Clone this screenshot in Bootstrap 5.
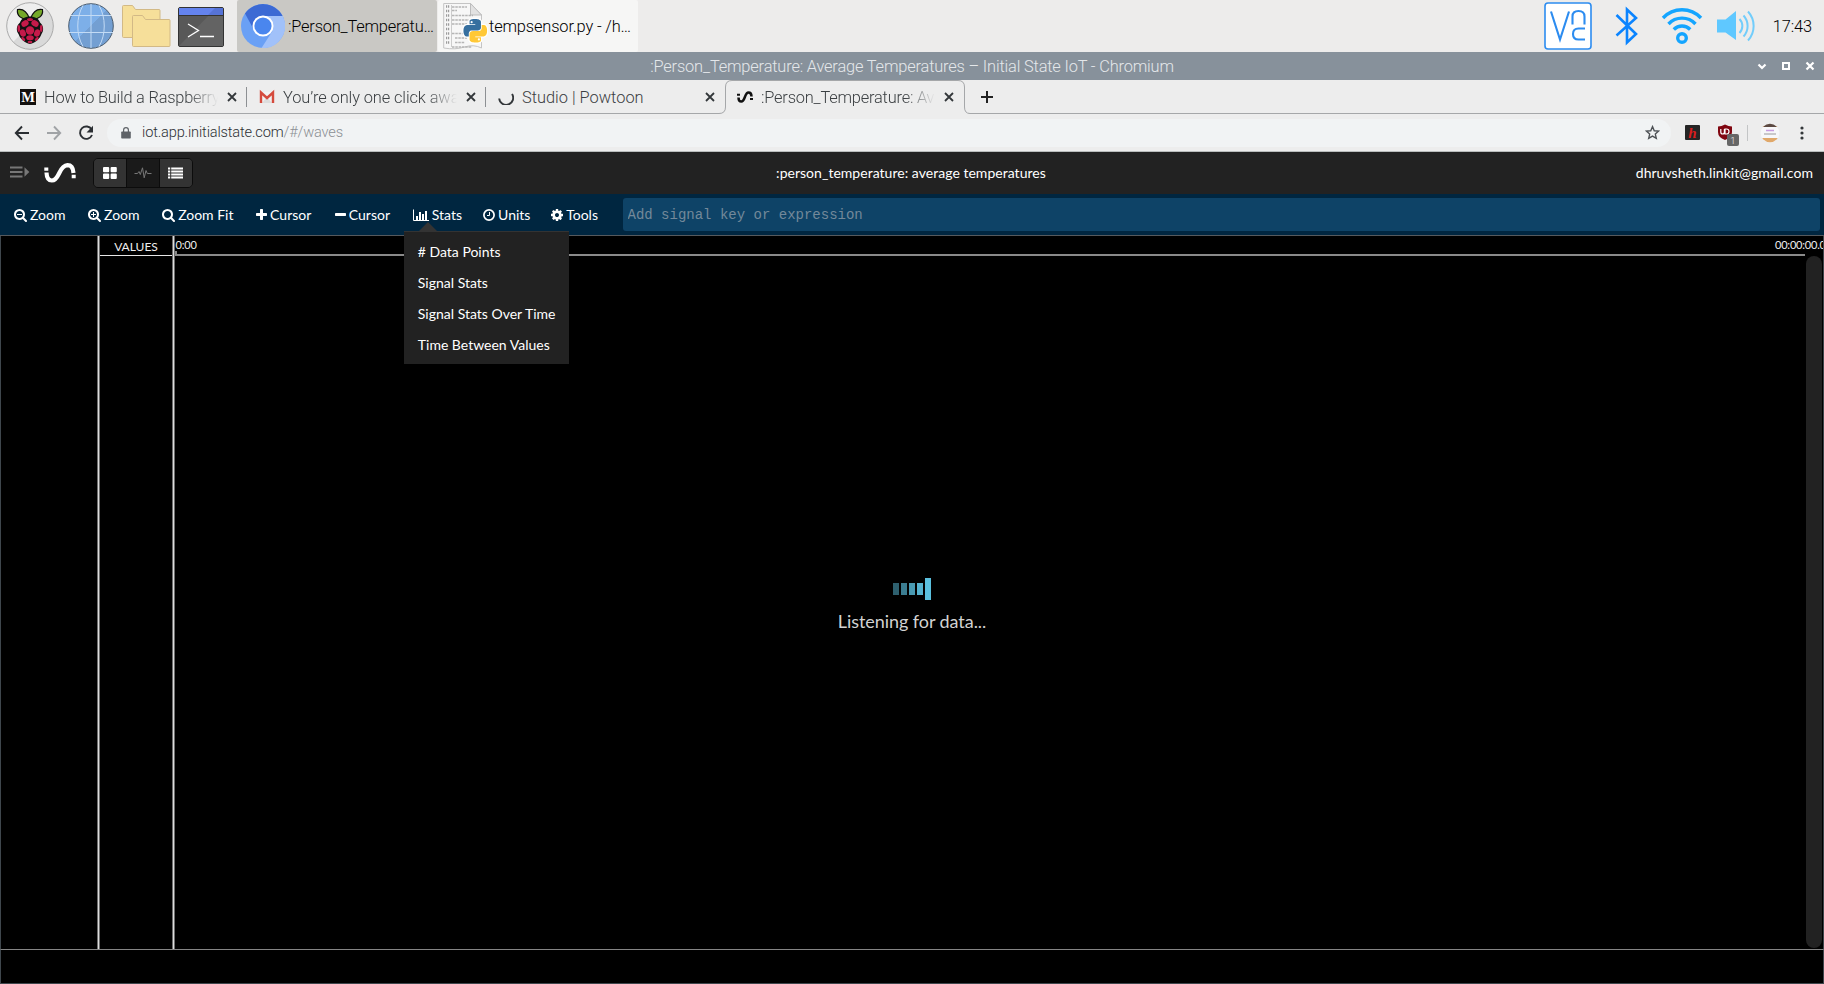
<!DOCTYPE html>
<html lang="en">
<head>
<meta charset="utf-8">
<title>:Person_Temperature: Average Temperatures – Initial State IoT</title>
<link href="https://cdn.jsdelivr.net/npm/bootstrap@5.3.0/dist/css/bootstrap.min.css" rel="stylesheet">
<style>
  html, body { height: 100%; overflow: hidden; }
  body { font-family: Roboto, "Liberation Sans", sans-serif; font-weight: 300; background: #000; line-height: 1.2; }
  svg { display: block; flex: none; }
  .taskbar { height: 52px; background: #edeceb; color: #000; font-size: 16.4px; padding-left: 6px; padding-right: 12px; }
  .task { width: 200px; height: 52px; border-radius: 2px; white-space: nowrap; letter-spacing: -.2px; }
  .task > span { padding-top: 1px; }
  .task-active { background: #c9c8c4; }
  .task-idle { background: #f6f6f5; letter-spacing: -.14px; }
  .clock { padding-top: 1px; letter-spacing: -.1px; }
  .titlebar { height: 28px; background: #87919b; color: #e4e7ea; font-size: 16.4px; letter-spacing: -.17px; padding-top: 1px; }
  .win-buttons { gap: 12px; padding-right: 8px; top: 8px; }
  .tabstrip { height: 34px; background: #ededed; padding-left: 8px; border-bottom: 1px solid #a5a7a9; }
  .tab { width: 239px; height: 33px; padding: 1px 9px 0 12px; font-size: 16.4px; color: #3c4043; position: relative; }
  .tab-divider { border-right: 0; }
  .tab-divider::after { content: ""; position: absolute; right: 0; top: 7px; width: 1px; height: 20px; background: #8d9093; }
  .tab-label { flex: 1 1 0; min-width: 0; white-space: nowrap; margin-left: 8px; margin-right: 8px; padding-top: 1px; letter-spacing: -.1px; }
  .fade-end { overflow: hidden; -webkit-mask-image: linear-gradient(90deg, #000 calc(100% - 30px), transparent); mask-image: linear-gradient(90deg, #000 calc(100% - 30px), transparent); }
  .tab-live > .tab-edge { position: absolute; left: -6px; top: 0; }
  .tab-live > :not(.tab-edge) { position: relative; }
  .navrow { height: 38px; background: #ededed; border-bottom: 1px solid #b9bdbd; padding-left: 14px; padding-right: 20px; }
  .omnibox { height: 28px; border-radius: 14px; background: #f1f3f4; font-size: 14.6px; letter-spacing: -.15px; color: #2c2f33; padding: 0 11px 0 14px; }
  .url-path { color: #8b8f93; }
  .apphead { height: 42px; background: #222; color: #fff; font: 400 14px/20px Lato, sans-serif; letter-spacing: .03px; padding-left: 9px; padding-right: 11px; }
  .apphead > div { flex: 1 1 0; }
  .viewgroup { border: 1px solid #0c0c0c; border-radius: 5px; overflow: hidden; height: 30px; margin-left: 16px; }
  .viewgroup > span { width: 32px; background: #333; }
  .viewgroup > span + span { border-left: 1px solid #0c0c0c; width: 33px; }
  .viewgroup > .view-on { background: #1a1a1a; }
  .toolrow { height: 42px; background: #002640; color: #fff; border-bottom: 1px solid #55595d; font: 400 14px/20px Lato, sans-serif; padding-left: 14px; padding-right: 4px; }
  .tool { gap: 3px; white-space: nowrap; position: relative; margin-left: 22.6px; }
  .signal-box { height: 33px; border: 0; border-radius: 3px; background: #0e4367; font: 14px "Liberation Mono", monospace; color: #fff; padding: 0 5px; }
  .signal-box::placeholder { color: #73899a; opacity: 1; }
  .statsmenu { position: absolute; left: -9px; top: 26px; width: 165px; background: #222; border-top: 1px solid #333; padding: 4px 0; z-index: 5; }
  .statsmenu::before { content: ""; position: absolute; left: 15px; top: -10px; border: 9px solid transparent; border-top: 0; border-bottom-color: #333; }
  .statsmenu > div { height: 31px; line-height: 31px; padding-left: 14px; }
  .waves { height: 713px; color: #eee; font: 400 11px/14px Lato, sans-serif; border-left: 1px solid #3f474d; border-right: 1px solid #3f474d; }
  .rail { width: 96px; }
  .splitter { width: 3px; background: linear-gradient(90deg, #6d6d6d 1px, #dcdcdc 1px 2px, #6d6d6d 2px); }
  .values-head { height: 20px; border-bottom: 1px solid #e6e6e6; font-size: 12px; line-height: 21px; width: 72px; }
  .ruler { height: 18px; overflow: hidden; white-space: nowrap; padding-top: 2px; letter-spacing: -.2px; }
  .ruler > :first-child { margin-left: .5px; }
  .ruler-line { height: 2px; background: #8a8a8a; margin-right: 18px; position: relative; }
  .ruler-line::before { content: ""; position: absolute; left: 0; top: -3px; width: 2px; height: 3px; background: #8a8a8a; }
  .vscroll { width: 16px; height: 692px; border-radius: 8px; background: #222; margin-right: 1px; }
  .overlay { top: 578px; }
  .loader { gap: 2px; height: 22px; }
  .loader i { width: 6px; height: 12px; background: #5bc0de; }
  .listening { font: 400 18px/24px Lato, sans-serif; letter-spacing: -.06px; color: #d2d2d2; margin-top: 9px; }
  .bottom { height: 35px; border: 1px solid #3f474d; border-top: 1px solid #858585; }
</style>
</head>
<body>
<div class="taskbar d-flex align-items-center">
  <svg width="48" height="50" viewBox="0 0 48 50">
    <defs><linearGradient id="gr" x1="0" y1="0" x2="1" y2="1"><stop offset=".48" stop-color="#eee"/><stop offset=".5" stop-color="#d9d9d9"/></linearGradient></defs>
    <circle cx="24" cy="25" r="23.3" fill="url(#gr)" stroke="#aaa"/>
    <path d="M23.500 17.500C20 8 14 8 11.500 8.500c-1 6 4 10.500 11 9.500zM24.500 17.500C28 8 34 8 36.500 8.500c1 6-4 10.500-11 9.500z" fill="#75a928" stroke="#111" stroke-width="1.200"/>
    <path d="M24 15.500c5 0 9 2.500 10 6 3.500 3 4.200 8 1.500 11.500C34 38 29 42 24 43c-5-1-10-5-11.500-10-2.700-3.500-2-8.500 1.500-11.500 1-3.500 5-6 10-6z" fill="#111"/>
    <g fill="#c51a4a"><circle cx="24" cy="29.500" r="4.200"/><ellipse cx="19" cy="22.500" rx="3.800" ry="3" transform="rotate(-30 19 22.500)"/><ellipse cx="29" cy="22.500" rx="3.800" ry="3" transform="rotate(30 29 22.500)"/><ellipse cx="24" cy="18.500" rx="3" ry="1.600"/><ellipse cx="16.800" cy="32" rx="3" ry="3.800" transform="rotate(-20 16.800 32)"/><ellipse cx="31.200" cy="32" rx="3" ry="3.800" transform="rotate(20 31.200 32)"/><ellipse cx="12.800" cy="27.500" rx="1.300" ry="3.400"/><ellipse cx="35.200" cy="27.500" rx="1.300" ry="3.400"/><ellipse cx="24" cy="36.700" rx="3.800" ry="2.500"/><ellipse cx="17.300" cy="38" rx="2.400" ry="1.300" transform="rotate(45 17.300 38)"/><ellipse cx="30.700" cy="38" rx="2.400" ry="1.300" transform="rotate(-45 30.700 38)"/><ellipse cx="24" cy="41" rx="2.400" ry="1.200"/></g>
  </svg>
  <svg width="46" height="46" viewBox="0 0 46 46" style="margin-left:14px">
    <defs><linearGradient id="gb" x1="0" y1="0" x2="1" y2="1"><stop offset=".49" stop-color="#7dafe8"/><stop offset=".5" stop-color="#739fd2"/></linearGradient></defs>
    <circle cx="23" cy="23" r="22.300" fill="url(#gb)" stroke="#4b5c6e"/>
    <path d="M23 1v44M3 12.500h40M1 29.500h44M15 2.500C8 14 8 32 15 43.500M31 2.500c7 11.500 7 29.500 0 41" fill="none" stroke="#c3dbf5" stroke-width="1"/>
  </svg>
  <svg width="49" height="43" viewBox="0 0 49 43" style="margin-left:8px">
    <g fill="#f6df9a" stroke="#d2b986" stroke-width="1"><path d="M.5 31.500V1.500q0-1 1-1h9l3 4H37q1 0 1 1v26q0 1-1 1H1.500q-1 0-1-1z"/><path d="M10.500 40.500v-29q0-1 1-1h9l3 4H47q1 0 1 1v25q0 1-1 1H11.500q-1 0-1-1z"/></g>
  </svg>
  <svg width="46" height="40" viewBox="0 0 46 40" style="margin-left:7px;margin-top:2px">
    <rect x=".5" y=".5" width="45" height="39" rx="1.500" fill="#585858" stroke="#333"/><path d="M38 1L1 39h44V1z" fill="#636363"/><path d="M1 1h44v7H1z" fill="#6483ee"/><path d="M37 1h8v7H30z" fill="#5673d6"/><path d="M1 8.500h44" stroke="#333"/>
    <path d="M10 17l10.500 6.500L10 30M22 29.500h14" fill="none" stroke="#fff" stroke-width="1.300"/>
  </svg>
  <div class="task task-active d-flex align-items-center" style="margin-left:13px;padding-left:4px">
    <svg width="44" height="44" viewBox="0 0 44 44">
      <circle cx="22" cy="22" r="22" fill="#6aa0f5"/>
      <path d="M22 12h19.600A22 22 0 0 1 20.500 44l11-17z" fill="#a1c1f9"/>
      <path d="M4 9.500A22 22 0 0 1 41.600 12H22a10 10 0 0 0-9 14z" fill="#3c6ad4"/>
      <circle cx="22" cy="22" r="10.500" fill="#fff"/><circle cx="22" cy="22" r="8.600" fill="#4a86ee"/>
    </svg>
    <span style="margin-left:3px">:Person_Temperatu…</span>
  </div>
  <div class="task task-idle d-flex align-items-center" style="margin-left:1px;padding-left:5px">
    <svg width="45" height="48" viewBox="0 0 45 48">
      <defs><path id="py" d="M14.250.18l.9.2.73.26.59.3.45.32.34.34.25.34.16.33.1.3.04.26.02.2-.01.13V8.500l-.05.63-.13.55-.21.46-.26.38-.3.31-.33.25-.35.19-.35.14-.33.1-.3.07-.26.04-.21.02H8.770l-.69.05-.59.14-.5.22-.41.27-.33.32-.27.35-.2.36-.15.37-.1.35-.07.32-.04.27-.02.21v3.060H3.170l-.21-.03-.28-.07-.32-.12-.35-.18-.36-.26-.36-.36-.35-.46-.32-.59-.28-.73-.21-.88-.14-1.050-.05-1.230.06-1.220.16-1.040.24-.87.32-.71.36-.57.4-.44.42-.33.42-.24.4-.16.36-.1.32-.05.24-.01h.16l.06.01h8.160v-.83H6.180l-.01-2.750-.02-.37.05-.34.11-.31.17-.28.25-.26.31-.23.38-.2.44-.18.51-.15.58-.12.64-.1.71-.06.77-.04.84-.02 1.270.05z"/></defs>
      <path d="M.7 1.500h27L38.500 13v33q-8-4-17-1t-20.800 1z" fill="#f7f7f7" stroke="#c4c4c4"/><path d="M27.500 1.500V13h11z" fill="#e2e2e2" stroke="#bdbdbd"/>
      <path d="M9 5h15M9 8.500h5M9 13.500h21M9 18h17M9 22h15M9 31.500h15M12 36h12M12 40.500h10M9 45h20" stroke="#b5b5b5" stroke-width="1.300" stroke-dasharray="2.500 .8"/>
      <path d="M3 4.500h4M3 9h4M3 13.500h4M3 18h4M3 22.500h4M3 27h4M3 31.500h4M3 36h4M3 40.500h4" stroke="#9b9b9b" stroke-width="2.400" stroke-dasharray="1.200 .8 1.200"/><path d="M8.500 3v42" stroke="#ccc"/>
      <g transform="translate(20.500 17) scale(.98)">
        <g fill="#fff" stroke="#fff" stroke-width="2.500"><use href="#py"/><use href="#py" transform="rotate(180 12 12)"/></g>
        <use href="#py" fill="#366f9f"/><use href="#py" fill="#ffc836" transform="rotate(180 12 12)"/>
        <circle cx="8.300" cy="3.200" r="1.100" fill="#fff"/><circle cx="15.700" cy="20.800" r="1.100" fill="#fff"/>
      </g>
    </svg>
    <span style="margin-left:1px">tempsensor.py - /h…</span>
  </div>
  <div class="ms-auto d-flex align-items-center">
    <svg width="48" height="48" viewBox="0 0 48 48"><rect x="1" y="1" width="46" height="46" rx="3" fill="#fff" stroke="#2c8cf0" stroke-width="1.600"/><path d="M7 9.500l9 28 9-28M28.500 22.500v-8q0-5.500 6-5.500t6 5.500v8M41 26.500h-6.500q-5.500 0-5.500 5.500t5.500 5.500H41" fill="none" stroke="#2c8cf0" stroke-width="2.100"/></svg>
    <svg width="24" height="42" viewBox="0 0 24 42" style="margin-left:23px"><path d="M1.500 10l19.500 19L12 37.500v-33L21 13 1.500 30.500" fill="none" stroke="#0b84ff" stroke-width="2.600"/></svg>
    <svg width="42" height="38" viewBox="0 0 42 38" style="margin-left:22px"><g fill="none" stroke="#14a5ff" stroke-width="3.400"><path d="M2 11a26 26 0 0 1 38 0M7.500 17a18.500 18.500 0 0 1 27 0M12.800 22.500a11.500 11.500 0 0 1 16.400 0"/><circle cx="21" cy="31" r="4.300"/></g></svg>
    <svg width="39" height="32" viewBox="0 0 39 32" style="margin-left:14px"><path d="M0 9.500h8.500L19 1v29L8.500 22.500H0z" fill="#5fc8ff"/><path d="M22.500 9a10 10 0 0 1 0 14M26.500 5.500a15.500 15.500 0 0 1 0 21M31 1.500a21.500 21.500 0 0 1 0 29" fill="none" stroke="#72cdfb" stroke-width="2"/></svg>
    <span class="clock" style="margin-left:17px">17:43</span>
  </div>
</div>

<div class="titlebar d-flex align-items-center position-relative">
  <span class="flex-fill text-center">:Person_Temperature: Average Temperatures – Initial State IoT - Chromium</span>
  <div class="win-buttons d-flex position-absolute end-0">
    <svg width="12" height="12" viewBox="0 0 12 12"><path d="M2.500 4.500L6 8l3.500-3.500" fill="none" stroke="#fff" stroke-width="2.200"/></svg>
    <svg width="12" height="12" viewBox="0 0 12 12"><path d="M3 3h6v6H3z" fill="none" stroke="#fff" stroke-width="2"/></svg>
    <svg width="12" height="12" viewBox="0 0 12 12"><path d="M2.500 2.500l7 7M9.500 2.500l-7 7" fill="none" stroke="#fff" stroke-width="2.200"/></svg>
  </div>
</div>

<div class="tabstrip d-flex">
  <div class="tab tab-divider d-flex align-items-center">
    <svg width="16" height="16" viewBox="0 0 16 16"><path d="M0 0h16v16H0z" fill="#12100e"/><text x="8" y="13" text-anchor="middle" font-family="Liberation Serif, serif" font-weight="700" font-size="14.500" fill="#fff">M</text></svg>
    <span class="tab-label fade-end" style="letter-spacing:-.22px">How to Build a Raspberry</span>
    <svg width="12" height="12" viewBox="0 0 12 12"><path d="M2 2l8 8M10 2l-8 8" stroke="#33373a" stroke-width="1.800"/></svg>
  </div>
  <div class="tab tab-divider d-flex align-items-center">
    <svg width="16" height="16" viewBox="0 0 16 16"><path d="M1 3h14v11H1z" fill="#f2f2f2"/><path d="M3 14l5-6 5 6z" fill="#ddd"/><path d="M2 14V3.500L8 9l6-5.500V14" fill="none" stroke="#d54b3d" stroke-width="2.400"/></svg>
    <span class="tab-label fade-end">You’re only one click awa</span>
    <svg width="12" height="12" viewBox="0 0 12 12"><path d="M2 2l8 8M10 2l-8 8" stroke="#33373a" stroke-width="1.800"/></svg>
  </div>
  <div class="tab d-flex align-items-center">
    <svg width="16" height="16" viewBox="0 0 16 16"><path d="M1.200 9.500A7 7 0 1 0 14 5" fill="none" stroke="#33373a" stroke-width="1.900"/></svg>
    <span class="tab-label" style="letter-spacing:0">Studio | Powtoon</span>
    <svg width="12" height="12" viewBox="0 0 12 12"><path d="M2 2l8 8M10 2l-8 8" stroke="#33373a" stroke-width="1.800"/></svg>
  </div>
  <div class="tab tab-live d-flex align-items-center">
    <svg class="tab-edge" width="251" height="34" viewBox="0 0 251 34"><path d="M0 34v-.5q6.500 0 6.500-6.500V7q0-6.500 6.500-6.500h226q6.500 0 6.500 6.500v20q0 6.500 5.500 6.500v.5z" fill="#ededed"/><path d="M0 33.500q6.500 0 6.500-6.500V7q0-6.500 6.500-6.500h226q6.500 0 6.500 6.500v20q0 6.500 5.500 6.500" fill="none" stroke="#a5a7a9"/></svg>
    <svg width="16" height="14" viewBox="0 0 16 14"><path d="M1.500 7.500q0 4 2.800 4 2 0 3.600-4.500T11.500 2.500q3 0 3 4" fill="none" stroke="#111" stroke-width="2.500"/><path d="M0 4.700h3M13 9h3" stroke="#111" stroke-width="2"/></svg>
    <span class="tab-label fade-end" style="letter-spacing:-.2px">:Person_Temperature: Ave</span>
    <svg width="12" height="12" viewBox="0 0 12 12"><path d="M2 2l8 8M10 2l-8 8" stroke="#33373a" stroke-width="1.800"/></svg>
  </div>
  <svg width="14" height="33" viewBox="0 0 14 33" style="margin-left:16px"><path d="M1 17h12M7 11v12" stroke="#222" stroke-width="2"/></svg>
</div>

<div class="navrow d-flex align-items-center">
  <svg width="16" height="16" viewBox="0 0 16 16"><path d="M15 8H2.500M8 1.500L1.800 8 8 14.500" fill="none" stroke="#2b2f33" stroke-width="1.900"/></svg>
  <svg width="16" height="16" viewBox="0 0 16 16" style="margin-left:16px"><path d="M1 8h12.500M8 1.500L14.200 8 8 14.500" fill="none" stroke="#a0a3a6" stroke-width="1.900"/></svg>
  <svg width="16" height="16" viewBox="0 0 16 16" style="margin-left:16px"><path d="M13.600 4.500A6.200 6.200 0 1 0 14 10" fill="none" stroke="#2b2f33" stroke-width="1.900"/><path d="M15 .8v6.700H8.500z" fill="#2b2f33"/></svg>
  <div class="omnibox d-flex align-items-center flex-fill" style="margin-left:13px">
    <svg width="10" height="12" viewBox="0 0 10 12"><path d="M1 4.500h8q.8 0 .8.800v5.400q0 .8-.8.800H1q-.8 0-.8-.8V5.300q0-.8.8-.8z" fill="#5f6368"/><path d="M2.600 5V3a2.400 2.400 0 0 1 4.800 0v2" fill="none" stroke="#5f6368" stroke-width="1.200"/></svg>
    <span style="margin-left:11px">iot.app.initialstate.com<span class="url-path">/#/waves</span></span>
    <svg class="ms-auto" width="15" height="15" viewBox="0 0 24 24"><path d="M12 2.600l2.800 6.600 7 .6-5.300 4.700 1.600 7L12 17.800l-6.100 3.700 1.600-7L2.200 9.800l7-.6z" fill="none" stroke="#4e5256" stroke-width="2.200"/></svg>
  </div>
  <svg width="15" height="15" viewBox="0 0 15 15" style="margin-left:14px;margin-top:-1px"><rect width="15" height="15" rx="1" fill="#252525"/><text x="7.500" y="12.500" text-anchor="middle" font-family="Liberation Serif, serif" font-weight="700" font-style="italic" font-size="15" fill="#d81e1e">h</text></svg>
  <svg width="24" height="24" viewBox="0 0 24 24" style="margin-left:16px;margin-top:2px"><path d="M9 2.500q3.500 2 7 2v5.500q0 5.500-7 8-7-2.500-7-8V4.500q3.500 0 7-2z" fill="#800610"/><path d="M4.800 7v3q0 2 1.800 2t1.800-2V7M9 12V7h1.500q2.500 0 2.500 2.500T10.500 12z" fill="none" stroke="#fff" stroke-width="1.200"/><rect x="11" y="12" width="12" height="12" rx="2" fill="#666"/><text x="17" y="21.500" text-anchor="middle" font-family="Roboto, sans-serif" font-size="9.500" fill="#eee">1</text></svg>
  <div style="width:1px;height:16px;background:#c3c5c6;margin-left:7px"></div>
  <svg width="20" height="20" viewBox="0 0 20 20" style="margin-left:12px"><defs><clipPath id="av"><circle cx="10" cy="10" r="9.300"/></clipPath></defs><g clip-path="url(#av)"><path d="M0 0h20v20H0z" fill="#f7f7f9"/><path d="M0 0h20v4H0z" fill="#5c4a42"/><path d="M0 1h4v3H0zM16 1h4v3h-4zM0 15h20v5H0z" fill="#e0a86a"/><path d="M6 7.500h8" stroke="#c79ae0" stroke-width="1.400"/><path d="M4 11h12" stroke="#999"/></g></svg>
  <svg width="4" height="14" viewBox="0 0 4 14" style="margin-left:20px"><g fill="#33373a"><circle cx="2" cy="2" r="1.600"/><circle cx="2" cy="7" r="1.600"/><circle cx="2" cy="12" r="1.600"/></g></svg>
</div>

<div class="apphead d-flex align-items-center">
  <div class="d-flex align-items-center">
    <svg width="21" height="12" viewBox="0 0 21 12" style="margin-top:-2px"><path d="M1 1.500h12.500M1 6h12.500M1 10.500h12.500" stroke="#777" stroke-width="2"/><path d="M15.500 1.200l4.800 4.800-4.800 4.800z" fill="#777"/></svg>
    <svg width="34" height="22" viewBox="0 0 34 22" style="margin-left:13px"><path d="M3.500 10.500q.3 8 5.300 8 4 0 7.500-7.500T24.500 3.200Q30 3.200 30.500 11" fill="none" stroke="#fff" stroke-width="4.200"/><path d="M1.300 5.500h4v3.300h-4zM28.700 12.800h4v3.500h-4z" fill="#fff"/></svg>
    <div class="viewgroup d-flex">
      <span class="d-flex align-items-center justify-content-center"><svg width="14" height="12" viewBox="0 0 14 12"><path d="M0 1q0-1 1-1h4.200q1 0 1 1v3.200q0 1-1 1H1q-1 0-1-1zM7.600 1q0-1 1-1h4.200q1 0 1 1v3.200q0 1-1 1H8.600q-1 0-1-1zM0 7.500q0-1 1-1h4.200q1 0 1 1V11q0 1-1 1H1q-1 0-1-1zM7.600 7.500q0-1 1-1h4.200q1 0 1 1V11q0 1-1 1H8.600q-1 0-1-1z" fill="#fff"/></svg></span>
      <span class="view-on d-flex align-items-center justify-content-center"><svg width="18" height="12" viewBox="0 0 18 12"><path d="M.5 6.500h3l1.500-2 1.300 3L8.500.8l1.700 10L12 3.500l1.300 3H17.500" fill="none" stroke="#777" stroke-width="1"/></svg></span>
      <span class="d-flex align-items-center justify-content-center"><svg width="16" height="12" viewBox="0 0 16 12"><path d="M0 1.500h2.200M0 4.500h2.200M0 7.500h2.200M0 10.500h2.200M3.200 1.500H15M3.200 4.500H15M3.200 7.500H15M3.200 10.500H15" stroke="#fff" stroke-width="2"/></svg></span>
    </div>
  </div>
  <div class="text-center">:person_temperature: average temperatures</div>
  <div class="text-end">dhruvsheth.linkit@gmail.com</div>
</div>

<div class="toolrow d-flex align-items-center">
  <div class="tool d-flex align-items-center" style="margin-left:0"><svg width="13" height="14" viewBox="64 0 1664 1792"><path id="lens" d="M1216 832q0-185-131.500-316.500t-316.500-131.500-316.500 131.500-131.500 316.500 131.500 316.500 316.500 131.500 316.500-131.500 131.500-316.500zm512 832q0 52-38 90t-90 38q-54 0-90-38l-343-342q-179 124-399 124-143 0-273.500-55.500t-225-150-150-225-55.500-273.500 55.500-273.500 150-225 225-150 273.500-55.500 273.500 55.500 225 150 150 225 55.500 273.500q0 220-124 399l343 343q37 37 37 90z" fill="#fff"/><path d="M448 832h640" stroke="#fff" stroke-width="128"/></svg><span>Zoom</span></div>
  <div class="tool d-flex align-items-center"><svg width="13" height="14" viewBox="64 0 1664 1792"><use href="#lens"/><path d="M448 832h640M768 512v640" stroke="#fff" stroke-width="128"/></svg><span>Zoom</span></div>
  <div class="tool d-flex align-items-center"><svg width="13" height="14" viewBox="64 0 1664 1792"><use href="#lens"/></svg><span>Zoom Fit</span></div>
  <div class="tool d-flex align-items-center"><svg width="11" height="14" viewBox="192 0 1408 1792"><path d="M1600 736v192q0 40-28 68t-68 28h-416v416q0 40-28 68t-68 28h-192q-40 0-68-28t-28-68v-416h-416q-40 0-68-28t-28-68v-192q0-40 28-68t68-28h416v-416q0-40 28-68t68-28h192q40 0 68 28t28 68v416h416q40 0 68 28t28 68z" fill="#fff"/></svg><span>Cursor</span></div>
  <div class="tool d-flex align-items-center" style="margin-left:23.500px"><svg width="11" height="14" viewBox="192 0 1408 1792"><path d="M1600 736v192q0 40-28 68t-68 28h-1216q-40 0-68-28t-28-68v-192q0-40 28-68t68-28h1216q40 0 68 28t28 68z" fill="#fff"/></svg><span>Cursor</span></div>
  <div class="tool d-flex align-items-center" style="margin-left:22.800px">
    <svg width="16" height="14" viewBox="0 0 16 14"><path d="M.5 1.500v11H16" fill="none" stroke="#fff" stroke-width="1"/><path d="M3 8h2v4H3zM6 4h2v8H6zM9 6h2v6H9zM12 3h2v9h-2z" fill="#fff"/></svg><span>Stats</span>
    <div class="statsmenu"><div># Data Points</div><div>Signal Stats</div><div>Signal Stats Over Time</div><div>Time Between Values</div></div>
  </div>
  <div class="tool d-flex align-items-center" style="margin-left:21px"><svg width="12" height="14" viewBox="0 0 12 14"><circle cx="6" cy="7" r="5.100" fill="none" stroke="#fff" stroke-width="1.700"/><path d="M6.500 4v3.500H4" fill="none" stroke="#fff"/></svg><span>Units</span></div>
  <div class="tool d-flex align-items-center" style="margin-left:20.800px"><svg width="12" height="14" viewBox="128 0 1536 1792"><path d="M1152 896q0-106-75-181t-181-75-181 75-75 181 75 181 181 75 181-75 75-181zm512-109v222q0 12-8 23t-20 13l-185 28q-19 54-39 91 35 50 107 138 10 12 10 25t-9 23q-27 37-99 108t-94 71q-12 0-26-9l-138-108q-44 23-91 38-16 136-29 186-7 28-36 28h-222q-14 0-24.500-8.500t-11.500-21.500l-28-184q-49-16-90-37l-141 107q-10 9-25 9-14 0-25-11-126-114-165-168-7-10-7-23 0-12 8-23 15-21 51-66.500t54-70.500q-27-50-41-99l-183-27q-13-2-21-12.500t-8-23.500v-222q0-12 8-23t19-13l186-28q14-46 39-92-40-57-107-138-10-12-10-24 0-10 9-23 26-36 98.500-107.500t94.500-71.500q13 0 26 10l138 107q44-23 91-38 16-136 29-186 7-28 36-28h222q14 0 24.500 8.500t11.500 21.500l28 184q49 16 90 37l142-107q9-9 24-9 13 0 25 10 129 119 165 170 7 8 7 22 0 12-8 23-15 21-51 66.500t-54 70.500q26 50 41 98l183 28q13 2 21 12.500t8 23.500z" fill="#fff"/></svg><span>Tools</span></div>
  <input class="signal-box flex-fill" type="text" placeholder="Add signal key or expression" style="margin-left:24.500px">
</div>

<div class="waves d-flex">
  <div class="rail"></div>
  <div class="splitter"></div>
  <div><div class="values-head text-center">VALUES</div></div>
  <div class="splitter"></div>
  <div class="d-flex flex-column flex-fill">
    <div class="ruler d-flex justify-content-between"><span>0:00</span><span style="width:48px">00:00:00.0</span></div>
    <div class="ruler-line"></div>
    <div class="d-flex justify-content-end"><div class="vscroll"></div></div>
  </div>
</div>
<div class="bottom"></div>
<div class="overlay position-absolute start-0 end-0 d-flex flex-column align-items-center">
  <div class="loader d-flex align-items-center"><i style="opacity:.5"></i><i style="opacity:.65"></i><i style="opacity:.8"></i><i style="opacity:.93"></i><i style="height:22px"></i></div>
  <div class="listening">Listening for data...</div>
</div>
<script src="https://cdn.jsdelivr.net/npm/bootstrap@5.3.0/dist/js/bootstrap.bundle.min.js"></script>
</body>
</html>
